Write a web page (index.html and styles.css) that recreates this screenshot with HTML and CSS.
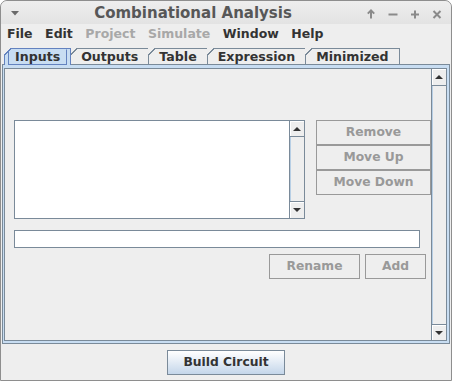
FILE: index.html
```html
<!DOCTYPE html>
<html>
<head>
<meta charset="utf-8">
<link rel="stylesheet" href="styles.css">
</head>
<body>
<div class="window">
  <div class="titlebar">
    <div class="tb-left">
      <svg class="tb-menu" width="8" height="5" viewBox="0 0 8 5"><path d="M0 0H8L4 4.5Z" fill="#6a6a6a"/></svg>
    </div>
    <div class="tb-title">Combinational Analysis</div>
    <div class="tb-right">
      <svg class="tb-icon" width="10" height="10" viewBox="0 0 10 10"><path d="M5 9.5V1.5M1.8 4.6L5 1.4L8.2 4.6" fill="none" stroke="#8a8a8a" stroke-width="2"/></svg>
      <svg class="tb-icon" width="10" height="10" viewBox="0 0 10 10"><path d="M0.5 5.5H9.5" stroke="#8a8a8a" stroke-width="2"/></svg>
      <svg class="tb-icon" width="10" height="10" viewBox="0 0 10 10"><path d="M1 5.5H9M5 1.5V9.5" stroke="#8a8a8a" stroke-width="2"/></svg>
      <svg class="tb-icon" width="10" height="10" viewBox="0 0 10 10"><path d="M1.5 2L8.5 9M8.5 2L1.5 9" stroke="#8a8a8a" stroke-width="2"/></svg>
    </div>
  </div>
  <div class="menubar">
    <span class="menu">File</span>
    <span class="menu">Edit</span>
    <span class="menu disabled">Project</span>
    <span class="menu disabled">Simulate</span>
    <span class="menu">Window</span>
    <span class="menu">Help</span>
  </div>
  <div class="tabs">
    <div class="tab selected"><span class="focus">Inputs</span></div>
    <div class="tab">Outputs</div>
    <div class="tab">Table</div>
    <div class="tab">Expression</div>
    <div class="tab">Minimized</div>
  </div>
  <div class="tabpanel">
    <div class="scrollpane">
      <div class="viewport">
        <div class="row1">
          <div class="list">
            <div class="list-body"></div>
            <div class="vbar">
              <div class="arrow up"><span class="tri-up"></span></div>
              <div class="track"></div>
              <div class="arrow down"><span class="tri-down"></span></div>
            </div>
          </div>
          <div class="btncol">
            <div class="btn disabled">Remove</div>
            <div class="btn disabled">Move Up</div>
            <div class="btn disabled">Move Down</div>
          </div>
        </div>
        <div class="field"></div>
        <div class="row3">
          <div class="btn disabled rename">Rename</div>
          <div class="btn disabled add">Add</div>
        </div>
      </div>
      <div class="vbar outer">
        <div class="arrow up big"><span class="tri-up"></span></div>
        <div class="track"></div>
        <div class="arrow down big"><span class="tri-down"></span></div>
      </div>
    </div>
  </div>
  <div class="footer">
    <div class="btn primary">Build Circuit</div>
  </div>
</div>
</body>
</html>
```

FILE: styles.css
```css
* { box-sizing: border-box; margin: 0; padding: 0; }
html, body { width: 452px; height: 381px; overflow: hidden; background: #ffffff; }
body { font-family: "DejaVu Sans", "Liberation Sans", sans-serif; font-weight: bold; font-size: 12.3px; color: #333333; }

.window {
  width: 452px; height: 381px;
  border: 1px solid #8e8e8e;
  border-radius: 7px 7px 0 0;
  background: #eeeeee;
  display: flex; flex-direction: column;
  overflow: hidden;
}

/* title bar */
.titlebar {
  height: 23px; flex: none;
  display: flex; align-items: stretch;
  background: linear-gradient(#eeeeee, #e3e3e3);
  border-radius: 6px 6px 0 0;
}
.tb-left { width: 28px; display: flex; align-items: center; padding-left: 10px; padding-top: 2px; }
.tb-title {
  flex: 1; text-align: center;
  font-size: 15px; color: #575757;
  line-height: 21px; padding-top: 2px;
  white-space: nowrap;
}
.tb-right { width: 94px; display: flex; align-items: center; gap: 12px; padding-left: 9px; padding-top: 2px; }
.tb-icon { display: block; }

/* menu bar */
.menubar {
  height: 20px; flex: none;
  display: flex; gap: 12.5px;
  padding-left: 6px;
  line-height: 20px;
  font-size: 12.5px;
  background: #eeeeee;
}
.menu { color: #333333; white-space: nowrap; }
.menu.disabled { color: #a8a8a8; }

/* tabs */
.tabs {
  height: 20px; flex: none;
  display: flex; align-items: flex-end;
  padding-left: 3px;
  font-size: 12.6px;
}
.tab {
  position: relative;
  height: 16px;
  border: 1px solid #7a8a99; border-bottom: none;
  padding: 0 10px;
  line-height: 15px;
  background: #eeeeee;
  white-space: nowrap;
  margin-left: -1px;
}
.tab:first-child { margin-left: 0; }
.tab::before {
  content: "";
  position: absolute; left: -1px; top: -1px;
  width: 7px; height: 7px;
  background: linear-gradient(135deg, #eeeeee 0 44%, #7a8a99 44% 58%, transparent 58%);
}
.tab.selected {
  height: 17px; margin-bottom: -1px; z-index: 1;
  background: #c8ddf2;
  border-color: #6382bf;
  padding: 0 3px;
}
.tab.selected::before {
  background: linear-gradient(135deg, #eeeeee 0 44%, #6382bf 44% 58%, transparent 58%);
}
.tab .focus {
  display: block;
  padding: 0 6px;
  border: 1px solid #6382bf;
  border-top-color: transparent;
  line-height: 14px;
  height: 16px;
}

/* tab panel */
.tabpanel {
  height: 280px; flex: none;
  margin: 0 1px;
  border: 1px solid #7a8a99;
  background: #c8ddf2;
  padding: 3px 2px 2px 1px;
}
.scrollpane {
  height: 100%;
  border: 1px solid #7a8a99;
  display: flex;
}
.viewport {
  flex: 1;
  background: #eeeeee;
  padding: 51px 0 0 9px;
  overflow: hidden;
}

/* scrollbars */
.vbar {
  width: 15px; flex: none;
  border-left: 1px solid #7a8a99;
  display: flex; flex-direction: column;
  background: #eeeeee;
}
.vbar .track {
  flex: 1;
  background: #eeeeee;
  box-shadow: inset 1px 0 #b8cfe5;
}
.arrow {
  display: flex; align-items: center; justify-content: center;
  background: #eeeeee;
  box-shadow: inset 1px 1px #ffffff;
}
.arrow.up { height: 16px; border-bottom: 1px solid #7a8a99; }
.arrow.down { height: 17px; border-top: 1px solid #7a8a99; }
.arrow.up.big { height: 17px; }
.arrow.down.big { height: 16px; }
.tri-up {
  width: 0; height: 0;
  border-left: 4px solid transparent; border-right: 4px solid transparent;
  border-bottom: 4px solid #333333;
}
.tri-down {
  width: 0; height: 0;
  border-left: 4px solid transparent; border-right: 4px solid transparent;
  border-top: 4px solid #333333;
}

/* content */
.row1 { display: flex; align-items: flex-start; }
.list {
  width: 291px; height: 99px;
  border: 1px solid #7a8a99;
  background: #ffffff;
  display: flex;
}
.list-body { flex: 1; }
.btncol { margin-left: 11px; width: 115px; display: flex; flex-direction: column; }

.btn {
  height: 25px;
  border: 1px solid #999999;
  background: #eeeeee;
  text-align: center;
  line-height: 23px;
  white-space: nowrap;
}
.btn.disabled { color: #999999; }

.field {
  margin-top: 11px;
  width: 406px; height: 18px;
  border: 1px solid #7a8a99;
  background: #ffffff;
}
.row3 {
  margin-top: 6px;
  width: 412px;
  display: flex; justify-content: flex-end; gap: 5px;
}
.rename { width: 91px; }
.add { width: 61px; }

/* footer */
.footer {
  flex: 1;
  display: flex; justify-content: center; align-items: flex-start;
  padding-top: 6px;
}
.btn.primary {
  width: 118px;
  border-color: #7a8a99;
  color: #333333;
  background: linear-gradient(#ffffff 0%, #e8eff7 40%, #c4d6ea 100%);
}
```
